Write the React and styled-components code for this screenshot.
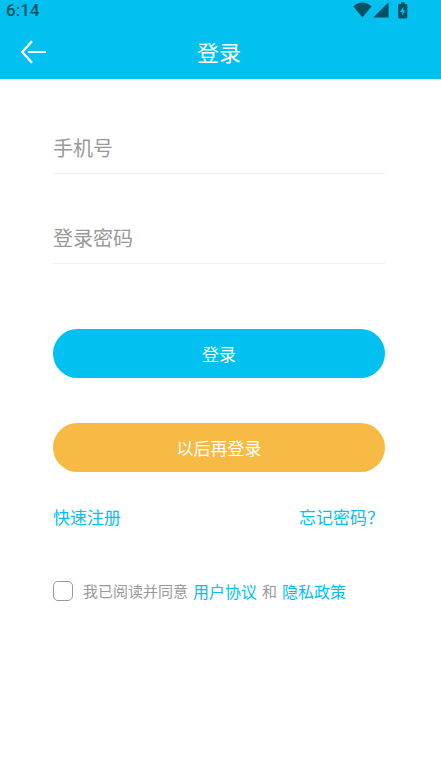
import React, { useState } from 'react';
import styled, { createGlobalStyle } from 'styled-components';

const GlobalStyle = createGlobalStyle`
    * {
        box-sizing: border-box;
    }

    body {
        margin: 0;
        background-color: #ffffff;
        font-family: 'Noto Sans CJK SC', sans-serif;
    }
`;

const BackIcon = () => (
    <svg width="28" height="26" viewBox="0 0 28 26" fill="none" stroke="#ffffff" aria-hidden="true">
        <path strokeWidth="2.4" strokeLinejoin="round" d="M12 2.2 L2.2 13 L12 23.8" />
        <path strokeWidth="2" d="M8 13 H26" />
    </svg>
);

const WifiIcon = () => (
    <svg width="20" height="16" viewBox="0 0 20 16" fill="#045064" aria-hidden="true">
        <path d="M0.3 4.2 C6 -0.9 13 -0.9 18.6 4.2 L9.4 15.5 Z" />
    </svg>
);

const SignalIcon = () => (
    <svg width="16" height="16" viewBox="0 0 16 16" fill="#045064" aria-hidden="true">
        <path d="M15.6 0.2 V15.5 H0.2 Z" />
    </svg>
);

const BatteryIcon = () => (
    <svg width="10" height="17" viewBox="0 0 10 17" aria-hidden="true">
        <path fill="#045064" d="M3 0.3 H6.5 V2 H8.5 Q9.3 2 9.3 2.8 V15.6 Q9.3 16.4 8.5 16.4 H1 Q0.2 16.4 0.2 15.6 V2.8 Q0.2 2 1 2 H3 Z" />
        <path fill="#02c1f0" d="M5.3 4.8 V8.3 H7.4 L4.1 13.6 V10.1 H2 Z" />
    </svg>
);

function App() {
    const [phone, setPhone] = useState('');
    const [password, setPassword] = useState('');
    const [agreed, setAgreed] = useState(false);

    return (
        <>
            <GlobalStyle />
            <Header>
                <StatusBar>
                    <Clock>6:14</Clock>
                    <StatusIcons>
                        <WifiIcon />
                        <SignalIcon />
                        <BatteryIcon />
                    </StatusIcons>
                </StatusBar>
                <NavBar>
                    <BackButton type="button" aria-label="返回">
                        <BackIcon />
                    </BackButton>
                    <Title>登录</Title>
                </NavBar>
            </Header>
            <Form onSubmit={(e) => e.preventDefault()}>
                <Field
                    type="tel"
                    placeholder="手机号"
                    aria-label="手机号"
                    value={phone}
                    onChange={(e) => setPhone(e.target.value)}
                />
                <Field
                    type="password"
                    placeholder="登录密码"
                    aria-label="登录密码"
                    value={password}
                    onChange={(e) => setPassword(e.target.value)}
                />
                <Buttons>
                    <PillButton type="submit" $color="#02c1f0">登录</PillButton>
                    <PillButton type="button" $color="#f7ba45">以后再登录</PillButton>
                </Buttons>
                <LinksRow>
                    <TextLink href="#register">快速注册</TextLink>
                    <TextLink href="#forgot">忘记密码？</TextLink>
                </LinksRow>
                <AgreementRow>
                    <Checkbox
                        type="checkbox"
                        id="agreement"
                        checked={agreed}
                        onChange={(e) => setAgreed(e.target.checked)}
                    />
                    <AgreementLabel htmlFor="agreement">我已阅读并同意</AgreementLabel>
                    <AgreementLink href="#terms">用户协议</AgreementLink>
                    <AgreementText>和</AgreementText>
                    <AgreementLink href="#privacy">隐私政策</AgreementLink>
                </AgreementRow>
            </Form>
        </>
    );
}

const Header = styled.header`
    background-color: #02c1f0;
`;

const StatusBar = styled.div`
    display: flex;
    align-items: center;
    justify-content: space-between;
    height: 24px;
    padding: 0 33px 4px 6px;
`;

const Clock = styled.span`
    font-family: Roboto, sans-serif;
    font-size: 17px;
    font-weight: 500;
    line-height: 20px;
    color: #045064;
`;

const StatusIcons = styled.div`
    display: flex;
    align-items: center;
    height: 18px;

    svg:last-child {
        margin-left: 9px;
    }
`;

const NavBar = styled.div`
    display: grid;
    grid-template-columns: 68px 1fr 71px;
    align-items: center;
    height: 55px;
`;

const BackButton = styled.button`
    display: flex;
    align-items: center;
    height: 48px;
    padding: 0 20px;
    border: none;
    background: none;
    cursor: pointer;
`;

const Title = styled.h1`
    margin: 0;
    padding-bottom: 2px;
    font-size: 22px;
    font-weight: 400;
    line-height: 32px;
    text-align: center;
    color: #ffffff;
`;

const Form = styled.form`
    display: flex;
    flex-direction: column;
    padding: 43px 56px 32px 53px;
`;

const Field = styled.input`
    width: 100%;
    height: 52px;
    padding: 0;
    border: none;
    border-bottom: 1px solid #eeeeee;
    background: none;
    font-family: inherit;
    font-size: 20px;
    color: #333333;
    outline: none;

    & + & {
        margin-top: 38px;
    }

    &::placeholder {
        color: #999999;
        opacity: 1;
    }
`;

const Buttons = styled.div`
    display: flex;
    flex-direction: column;
    gap: 45px;
    margin-top: 65px;
`;

const PillButton = styled.button`
    height: 49px;
    padding: 0;
    border: none;
    border-radius: 25px;
    background-color: ${(props) => props.$color};
    font-family: inherit;
    font-size: 17px;
    color: #ffffff;
    cursor: pointer;
`;

const LinksRow = styled.div`
    display: flex;
    justify-content: space-between;
    margin-top: 32px;
    padding-right: 1px;
`;

const TextLink = styled.a`
    font-size: 17px;
    line-height: 26px;
    color: #02c1f0;
    text-decoration: none;
`;

const AgreementRow = styled.div`
    display: flex;
    align-items: center;
    gap: 5px;
    margin-top: 49px;
`;

const Checkbox = styled.input`
    appearance: none;
    flex: none;
    width: 20px;
    height: 20px;
    margin: 0 5px 0 0;
    border: 1px solid #999999;
    border-radius: 5px;
    background-color: #ffffff;

    &:checked {
        border-color: #02c1f0;
        background-color: #02c1f0;
    }
`;

const AgreementText = styled.span`
    font-size: 15px;
    line-height: 24px;
    white-space: nowrap;
    color: #999999;
`;

const AgreementLabel = styled(AgreementText).attrs({ as: 'label' })``;

const AgreementLink = styled.a`
    font-size: 16px;
    line-height: 24px;
    white-space: nowrap;
    color: #02c1f0;
    text-decoration: none;
`;

export default App;
